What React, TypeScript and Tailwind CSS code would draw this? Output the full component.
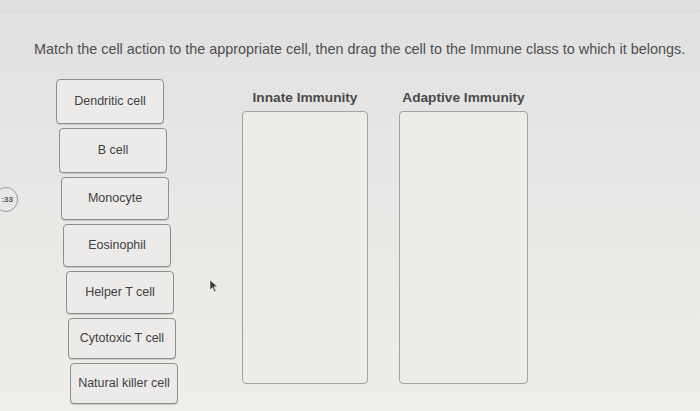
import React from "react";

const items: { label: string; ml: string; h: string }[] = [
  { label: "Dendritic cell", ml: "ml-[0px]", h: "h-[45px]" },
  { label: "B cell", ml: "ml-[3px]", h: "h-[45px]" },
  { label: "Monocyte", ml: "ml-[5px]", h: "h-[43px]" },
  { label: "Eosinophil", ml: "ml-[7px]", h: "h-[43px]" },
  { label: "Helper T cell", ml: "ml-[10px]", h: "h-[43px]" },
  { label: "Cytotoxic T cell", ml: "ml-[12px]", h: "h-[41px]" },
  { label: "Natural killer cell", ml: "ml-[14px]", h: "h-[41px]" },
];

export default function App() {
  return (
    <div
      className="relative w-[700px] h-[411px] overflow-hidden bg-gradient-to-b from-[#e1e0e1] via-[#e9e8e6] to-[#efeee8] text-[#4d4d4d]"
      style={{ fontFamily: '"Liberation Sans", Arial, sans-serif' }}
    >
      <div className="h-[12px] border-b border-[#d9d8d9] bg-[#dfdee0]" />
      <div className="pl-[34px] pt-[29px] text-[14.4px] leading-[17px] text-[#4e4e4e] whitespace-nowrap">
        Match the cell action to the appropriate cell, then drag the cell to the Immune class to which it belongs.
      </div>
      <div className="flex mt-[21px]">
        <div className="flex flex-col gap-[4px] ml-[56px] w-[186px]">
          {items.map((it) => (
            <div
              key={it.label}
              className={`${it.ml} ${it.h} w-[108px] flex items-center justify-center rounded-[4px] border border-[#8e8e8e] bg-[#ecebea] text-[12.5px] text-[#3f3f3f] shadow-[0_1px_0_#c8c8c8]`}
            >
              {it.label}
            </div>
          ))}
        </div>
        <div className="flex gap-[31px] pt-[10px]">
          <div className="flex flex-col items-center w-[126px]">
            <div className="text-[13.7px] leading-[17px] font-bold text-[#4a4a4a] whitespace-nowrap">Innate Immunity</div>
            <div className="mt-[5px] w-[126px] h-[273px] rounded-[4px] border border-[#a3a3a3] bg-[#edece8]" />
          </div>
          <div className="flex flex-col items-center w-[129px]">
            <div className="text-[13.7px] leading-[17px] font-bold text-[#4a4a4a] whitespace-nowrap">Adaptive Immunity</div>
            <div className="mt-[5px] w-[129px] h-[273px] rounded-[4px] border border-[#a3a3a3] bg-[#edece8]" />
          </div>
        </div>
      </div>
      <div className="absolute left-[-6px] top-[187px] w-[24px] h-[25px] rounded-full border border-[#9a9a9a] bg-[#e8e7e6] flex items-center justify-end pr-[4px] text-[8px] font-bold text-[#555]">
        :33
      </div>
      <svg className="absolute left-[209px] top-[279px]" width="10" height="14" viewBox="0 0 10 14">
        <path d="M1 1 L1 11 L3.5 8.5 L5.5 13 L7 12.3 L5 7.8 L8.5 7.8 Z" fill="#3a3a3a" stroke="#f0f0f0" strokeWidth="0.6" />
      </svg>
    </div>
  );
}
